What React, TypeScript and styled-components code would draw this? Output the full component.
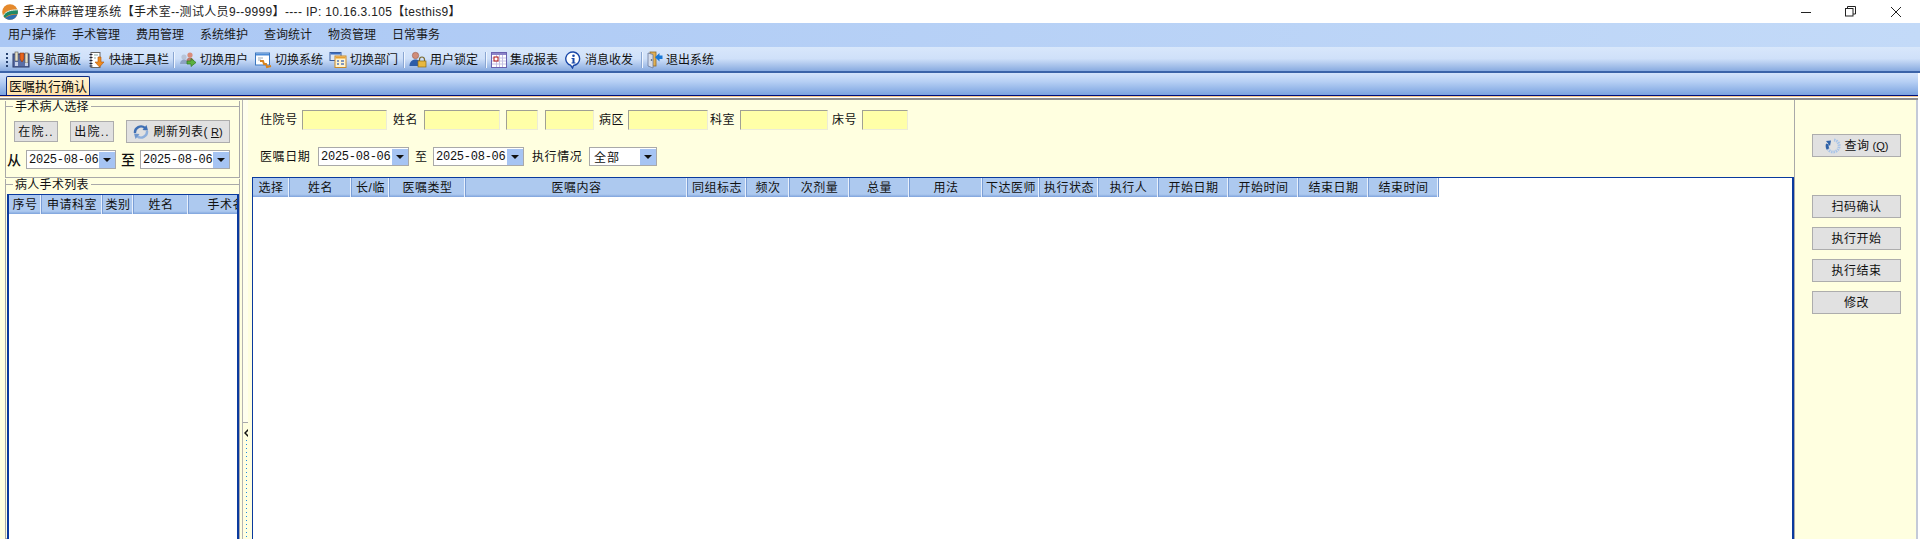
import React from "react";
import styled, { createGlobalStyle } from "styled-components";

const Global = createGlobalStyle`
  html, body { margin: 0; padding: 0; background: #fff; overflow: hidden; }
  #root { width: 1920px; height: 539px; overflow: hidden; }
  * { box-sizing: border-box; }
`;

const FONT = `"Liberation Sans", "Noto Sans CJK SC", sans-serif`;
const MONO = `"Liberation Mono", "Noto Sans CJK SC", monospace`;

const Shell = styled.div`
  width: 1920px; height: 539px; display: flex; flex-direction: column;
  font: 12px/14px ${FONT}; color: #111; background: #fff; overflow: hidden;
`;
const TitleBar = styled.div`
  height: 23px; flex: none; background: #fff; display: flex; align-items: center; padding-left: 2px;
`;
const TitleText = styled.span`
  margin-left: 5px; font-size: 12px; color: #222; white-space: pre; letter-spacing: 0.33px;
`;
const WinButtons = styled.div`
  margin-left: auto; display: flex; align-items: center; height: 100%; padding-right: 18px; gap: 33px;
`;
const MenuBar = styled.div`
  height: 24px; flex: none; display: flex; align-items: center; padding-left: 8px; gap: 16px;
  background: linear-gradient(90deg, #aac7f4, #c3daf8);
`;
const MenuItem = styled.span`color: #1a1a1a;`;
const ToolBar = styled.div`
  height: 26px; flex: none; display: flex; align-items: center; padding: 0 0 0 6px;
  background: linear-gradient(180deg, #d8e7fb 0%, #cfe0f9 45%, #86a9df 94%, #3b63a8 94%);
`;
const Grip = styled.span`
  width: 2px; height: 14px; margin-right: 4px; flex: none;
  background: repeating-linear-gradient(180deg, #27416f 0 2px, transparent 2px 4px);
`;
const ToolItem = styled.span<{ $w: number }>`
  width: ${(p) => p.$w}px; flex: none; display: flex; align-items: center; gap: 3px; white-space: nowrap;
`;
const ToolSep = styled.span`
  width: 1px; height: 16px; background: #8aa6d2; box-shadow: 1px 0 0 #f0f6ff; margin: 0 5px 0 3px; flex: none;
`;
const TabStrip = styled.div`
  height: 22px; flex: none; display: flex; align-items: flex-end; padding: 0 2px 0 6px; margin-right: 2px;
  background: linear-gradient(180deg, #d4e3fb 0%, #b6cff4 40%, #7ba3e0 100%);
`;
const Tab = styled.div`
  width: 84px; height: 19px; display: flex; align-items: center; justify-content: center; padding-top: 2px;
  border: 1px solid #0a2a80; border-bottom: none; border-radius: 2px 2px 0 0; font-size: 13px;
  background: linear-gradient(180deg, #fff3d0 0%, #ffe0a8 100%); color: #111;
`;
const TabRule = styled.div`
  height: 5px; flex: none; background: linear-gradient(180deg, #00107a 0 1px, #f6c78c 1px 2px, #fff 2px 3px, #8c8c8c 3px 5px);
  margin-right: 2px;
`;
const Body = styled.div`
  flex: 1; display: flex; min-height: 0; padding-left: 2px; margin-right: 2px; position: relative; background: #ffffe0;
`;

/* left column */
const LeftColumn = styled.div`
  width: 238px; flex: none; display: flex; flex-direction: column; padding: 1px 0 0 3px;
`;
const Group = styled.div<{ $h?: number; $mt?: number }>`
  border: 1px solid #a9a9a9; border-top: none; position: relative; margin-top: ${(p) => p.$mt ?? 0}px;
  ${(p) => (p.$h ? `height: ${p.$h}px; flex: none;` : "flex: 1; min-height: 0;")}
  &::before {
    content: ""; position: absolute; left: 0; right: 0; top: 5px; border-top: 1px solid #a9a9a9;
  }
`;
const GroupTitle = styled.div`
  position: relative; z-index: 1; height: 13px; line-height: 13px; margin-left: 7px; width: fit-content;
  padding: 0 2px; background: #ffffe0; letter-spacing: 0.3px;
`;
const LeftRow = styled.div<{ $gap: number; $top: number; $left: number }>`
  display: flex; align-items: center; gap: ${(p) => p.$gap}px;
  margin-top: ${(p) => p.$top}px; padding-left: ${(p) => p.$left}px;
`;
const FlatButton = styled.div<{ $w: number; $h?: number; $track?: number }>`
  width: ${(p) => p.$w}px; height: ${(p) => p.$h ?? 21}px; flex: none; display: flex; align-items: center; justify-content: center; gap: 4px;
  background: #e1e1e1; border: 1px solid #adadad; color: #111; white-space: nowrap; letter-spacing: ${(p) => p.$track ?? 0.5}px;
`;
const Hotkey = styled.span`letter-spacing: 0; font-size: 11px; margin-left: -1px;`;
const ZhLarge = styled.span`font-size: 14px; font-weight: 500; color: #111; width: 14px;`;
const DateBox = styled.div<{ $w: number }>`
  width: ${(p) => p.$w}px; height: 19px; flex: none; display: flex; align-items: center; justify-content: space-between;
  background: #fff; border: 1px solid #a9a9a9; padding: 0 0 0 2px;
  font: 12px ${MONO}; letter-spacing: -0.25px; color: #111;
`;
const ZhInBox = styled.span`font: 12px ${FONT}; margin-left: 2px; letter-spacing: 1px;`;
const DropArrow = styled.span`
  width: 16px; height: 16px; flex: none; background: #a6c4f3; display: flex; align-items: center; justify-content: center;
  &::after { content: ""; border: 4px solid transparent; border-top: 4px solid #111; border-bottom: none; }
`;
const PatientList = styled.div`
  position: absolute; left: 1px; right: 0; top: 15px; bottom: -2px;
  border: 1px solid #0a3a9e; border-left-width: 2px; border-right-width: 2px; background: #fff; overflow: hidden;
`;

/* grid header shared */
const HeaderRow = styled.div<{ $w?: number }>`
  display: flex; height: 19px; ${(p) => (p.$w ? `width: ${p.$w}px;` : "")}
  background: linear-gradient(180deg, #adc9ef 0%, #adc9ef 85%, #7ea3dc 100%);
`;
const HeaderCell = styled.div<{ $w: number }>`
  width: ${(p) => p.$w}px; flex: none; display: flex; align-items: center; justify-content: center; white-space: nowrap; overflow: hidden;
  border-right: 1px solid #7a9ed6; box-shadow: inset -1px 0 0 #e8f0fc; color: #111; letter-spacing: 0.5px;
`;

/* splitter */
const SplitterTrack = styled.div`
  width: 10px; flex: none; border-left: 1px solid #b4b4b4; margin-left: 2px; margin-right: -4px; background: #ffffee; padding-top: 322px;
`;
const SplitterHandle = styled.div`
  width: 8px; height: 120px; border: 1px solid #a9a9a9; border-left: none; border-bottom: none; background: #ffffe0;
  display: flex; flex-direction: column; align-items: center; padding-top: 6px;
`;
const SplitArrow = styled.svg`display: block; flex: none;`;
const SplitDots = styled.span`
  flex: 1; width: 1px; margin-top: 3px;
  background: repeating-linear-gradient(180deg, #1d8be0 0 1px, transparent 1px 4px);
`;

/* centre */
const Centre = styled.div`
  width: 1547px; flex: none; display: flex; flex-direction: column; border-right: 1px solid #a9a9a9; position: relative;
  background: #ffffe0;
`;
const FilterRow = styled.div<{ $top: number; $h: number }>`
  display: flex; align-items: center; height: ${(p) => p.$h}px; margin-top: ${(p) => p.$top}px; padding-left: 12px;
`;
const Label = styled.span<{ $w: number; $pad?: number }>`
  width: ${(p) => p.$w}px; padding-left: ${(p) => p.$pad ?? 0}px; flex: none; white-space: nowrap; color: #111; letter-spacing: 0.6px;
`;
const Field = styled.div<{ $w: number; $gap?: number }>`
  width: ${(p) => p.$w}px; height: 20px; flex: none; margin-right: ${(p) => p.$gap ?? 0}px;
  background: #ffffa8; border: 1px solid #c4c4b8; border-top-color: #a0a094; border-left-color: #a0a094;
  border-right-color: #ececd8; border-bottom-color: #ececd8;
`;
const OrderTable = styled.div`
  flex: 1; margin: 11px 0 0 4px; background: #fff; min-height: 0;
  border: 1px solid #0a3a9e; border-width: 1px 2px 0 1px; overflow: hidden;
`;

/* right */
const RightColumn = styled.div`
  flex: 1; display: flex; flex-direction: column; align-items: flex-start; padding: 34px 0 0 17px;
  border-right: 2px solid #c4cad8;
`;
const RightGap = styled.div`height: 38px; flex: none;`;
const RightStack = styled.div`display: flex; flex-direction: column; gap: 9px;`;

const WinMin = () => (
  <svg width="12" height="12" viewBox="0 0 12 12"><path d="M1 6.500h10" stroke="#222" strokeWidth="1" /></svg>
);
const WinRestore = () => (
  <svg width="12" height="12" viewBox="0 0 12 12" fill="none" stroke="#222">
    <rect x="0.500" y="2.500" width="7.500" height="7.500" />
    <path d="M2.500 2.500V0.500H10.500V8H8" />
  </svg>
);
const WinClose = () => (
  <svg width="12" height="12" viewBox="0 0 12 12"><path d="M1 1l10 10M11 1L1 11" stroke="#222" strokeWidth="1" /></svg>
);
const Logo = () => (
  <svg width="16" height="16" viewBox="0 0 16 16">
    <circle cx="8" cy="8" r="7.800" fill="#e5892b" />
    <path d="M1.200 11.800C4 6.500 10 6 15.600 5.800 16 7.500 16 8.500 15.600 10 10 10 6 10.500 3 14z" fill="#1d8a66" />
    <path d="M3 14C6.500 11.200 11 10.600 15.400 10.400 14 13.600 11.300 15.800 8 15.800 6 15.800 4.400 15.100 3 14z" fill="#2c6fb4" />
    <path d="M1.200 11.800C4 6.500 10 6 15.600 5.800" fill="none" stroke="#f4f4ea" strokeWidth="1" />
  </svg>
);
const IconNav = () => (
  <svg width="18" height="18" viewBox="0 0 18 18">
    <rect x="1" y="3" width="16" height="13" fill="#5a6fa8" stroke="#2c3a68" />
    <rect x="3" y="1" width="3" height="9" fill="#e9e2c8" stroke="#555" strokeWidth=".6" />
    <path d="M8 2h4v6l-2 3-2-3z" fill="#e8641e" stroke="#8c3608" strokeWidth=".6" />
    <rect x="13" y="2" width="3" height="10" fill="#e9e2c8" stroke="#555" strokeWidth=".6" />
    <rect x="3" y="11" width="3" height="4" fill="#c8d2ea" />
    <rect x="13" y="12" width="3" height="3" fill="#c8d2ea" />
  </svg>
);
const IconTool = () => (
  <svg width="18" height="18" viewBox="0 0 18 18">
    <rect x="3" y="1.500" width="9" height="15" fill="#fff" stroke="#666" />
    <path d="M1.500 3.500h3M1.500 6.500h3M1.500 9.500h3M1.500 12.500h3M1.500 15h3" stroke="#223" strokeWidth="1.200" />
    <path d="M6 4h4M6 7h2" stroke="#8aa" />
    <path d="M10 6h3v5h3l-4.500 5L7 11h3z" fill="#f08a1c" stroke="#b0540c" strokeWidth=".6" />
  </svg>
);
const IconUsers = () => (
  <svg width="18" height="18" viewBox="0 0 18 18">
    <circle cx="11" cy="4" r="2.600" fill="#d98c7a" />
    <path d="M7 11c0-3 2-4.500 4-4.500s4 1.500 4 4.500z" fill="#b87a70" />
    <circle cx="5" cy="6" r="2.600" fill="#b8c4d8" />
    <path d="M1 13c0-3 2-4.500 4-4.500S9 10 9 13z" fill="#8ea2c4" />
    <path d="M8 10h4V7.500l5 4-5 4V13H8z" fill="#5cb040" stroke="#2c7a1c" strokeWidth=".7" />
  </svg>
);
const IconSystem = () => (
  <svg width="18" height="18" viewBox="0 0 18 18">
    <rect x="1.500" y="2" width="14" height="12" fill="#fff" stroke="#3c78c0" />
    <rect x="2" y="2.500" width="13" height="2" fill="#4c8cd8" />
    <path d="M4 7h5M4 9h3" stroke="#9ab" />
    <path d="M6 10h3l1 3h2l1 3 4-1" fill="none" stroke="#d8821c" strokeWidth="2" />
  </svg>
);
const IconDept = () => (
  <svg width="18" height="18" viewBox="0 0 18 18">
    <rect x="1" y="1.500" width="11" height="8" fill="#dfe8f6" stroke="#3a5ea0" />
    <rect x="1.500" y="2" width="10" height="1.500" fill="#3a6cc0" />
    <rect x="6" y="5" width="11" height="11.500" fill="#fff4d0" stroke="#c88a2c" />
    <rect x="6.500" y="5.500" width="10" height="2" fill="#e8a030" />
    <path d="M8 10h2M12 10h3M8 13h2M12 13h3" stroke="#5878b8" strokeWidth="1.500" />
  </svg>
);
const IconLock = () => (
  <svg width="18" height="18" viewBox="0 0 18 18">
    <circle cx="6.500" cy="4.500" r="3.200" fill="#d08c78" stroke="#8c5444" strokeWidth=".5" />
    <path d="M0.500 15c0-4 2.500-6.500 6-6.500s5 2 5 6.500z" fill="#2c5ca8" />
    <path d="M10.500 10V8.500a2.500 2.500 0 015 0V10" fill="none" stroke="#7a6a30" strokeWidth="1.200" />
    <rect x="9" y="10" width="8" height="6" fill="#e8b840" stroke="#8c6a14" strokeWidth=".7" />
  </svg>
);
const IconReport = () => (
  <svg width="16" height="16" viewBox="0 0 16 16">
    <rect x=".5" y=".5" width="15" height="15" fill="#fff" stroke="#6a62b0" />
    <rect x="1" y="1" width="14" height="2" fill="#8c84c8" />
    <path d="M5.500 3v12M8.500 3v12M11.500 3v12M1 6h14M1 9h14M1 12h14" stroke="#c4c0e4" />
    <rect x="3" y="5" width="4" height="4" fill="#fff" stroke="#b01010" strokeWidth="1" />
  </svg>
);
const IconInfo = () => (
  <svg width="17" height="18" viewBox="0 0 17 18">
    <path d="M8.500 1a7 6.800 0 00-3 13.200L7.500 17l1-2.500A7 6.800 0 008.500 1z" fill="#fff" stroke="#1a48a8" strokeWidth="1.400" />
    <circle cx="8.500" cy="4.800" r="1.300" fill="#1a48a8" />
    <path d="M6.500 7h3v4.500h1v1H6.500v-1h1V8h-1z" fill="#1a48a8" />
  </svg>
);
const IconExit = () => (
  <svg width="16" height="18" viewBox="0 0 16 18">
    <rect x="3" y="1" width="6" height="14" fill="#e2b050" stroke="#8c6a2c" strokeWidth=".8" />
    <path d="M1 2l5 1.500V17L1 15z" fill="#d4dcec" stroke="#6a7a9c" strokeWidth=".8" />
    <circle cx="4.500" cy="9" r=".8" fill="#345" />
    <path d="M15.500 4.500v3.500h-3v2.500L8 6.200l4.500-4.200v2.500z" fill="#1878d8" />
  </svg>
);
const IconRefresh = () => (
  <svg width="16" height="16" viewBox="0 0 16 16" fill="none">
    <path d="M2 9a6 6 0 0110-5" stroke="#3f6fb4" strokeWidth="2.400" />
    <path d="M14 7a6 6 0 01-10 5" stroke="#8fb0dc" strokeWidth="2.400" />
    <path d="M9.500 6L15 6.500 13.500 1z" fill="#3f6fb4" />
    <path d="M6.500 10L1 9.500 2.500 15z" fill="#6f96cc" />
  </svg>
);
const IconQuery = () => (
  <svg width="16" height="16" viewBox="0 0 16 16" fill="none">
    <path d="M9 2a6 6 0 11-6 9" stroke="#a8c4e8" strokeWidth="3" strokeDasharray="1.500 .8" />
    <path d="M3 11a6 6 0 01-.5-5" stroke="#2f62a8" strokeWidth="3" />
    <path d="M1 3l5-.5L5 8z" fill="#2f62a8" />
  </svg>
);

const menus = ["用户操作", "手术管理", "费用管理", "系统维护", "查询统计", "物资管理", "日常事务"];

const leftColumns: [string, number][] = [
  ["序号", 33], ["申请科室", 61], ["类别", 31], ["姓名", 55], ["手术名称", 88],
];
const orderColumns: [string, number][] = [
  ["选择", 37], ["姓名", 62], ["长/临", 38], ["医嘱类型", 76], ["医嘱内容", 222], ["同组标志", 59],
  ["频次", 43], ["次剂量", 60], ["总量", 60], ["用法", 73], ["下达医师", 57], ["执行状态", 59],
  ["执行人", 60], ["开始日期", 70], ["开始时间", 70], ["结束日期", 70], ["结束时间", 70],
];

const DateField = ({ w }: { w: number }) => (
  <DateBox $w={w}>2025-08-06<DropArrow /></DateBox>
);

export default function App() {
  return (
    <Shell>
      <Global />
      <TitleBar>
        <Logo />
        <TitleText>手术麻醉管理系统【手术室--测试人员9--9999】---- IP: 10.16.3.105【testhis9】</TitleText>
        <WinButtons><WinMin /><WinRestore /><WinClose /></WinButtons>
      </TitleBar>
      <MenuBar>
        {menus.map((m) => <MenuItem key={m}>{m}</MenuItem>)}
      </MenuBar>
      <ToolBar>
        <Grip />
        <ToolItem $w={76}><IconNav />导航面板</ToolItem>
        <ToolItem $w={82}><IconTool />快捷工具栏</ToolItem>
        <ToolSep />
        <ToolItem $w={75}><IconUsers />切换用户</ToolItem>
        <ToolItem $w={75}><IconSystem />切换系统</ToolItem>
        <ToolItem $w={71}><IconDept />切换部门</ToolItem>
        <ToolSep />
        <ToolItem $w={73}><IconLock />用户锁定</ToolItem>
        <ToolSep />
        <ToolItem $w={74}><IconReport />集成报表</ToolItem>
        <ToolItem $w={73}><IconInfo />消息收发</ToolItem>
        <ToolSep />
        <ToolItem $w={75}><IconExit />退出系统</ToolItem>
      </ToolBar>
      <TabStrip><Tab>医嘱执行确认</Tab></TabStrip>
      <TabRule />
      <Body>
        <LeftColumn>
          <Group $h={77}>
            <GroupTitle>手术病人选择</GroupTitle>
            <LeftRow $gap={12} $top={6} $left={8}>
              <FlatButton $w={44} $track={1.2}>在院..</FlatButton>
              <FlatButton $w={44} $track={1.2}>出院..</FlatButton>
              <FlatButton $w={104} $h={23}><IconRefresh />刷新列表(<Hotkey><u>R</u>)</Hotkey></FlatButton>
            </LeftRow>
            <LeftRow $gap={5} $top={7} $left={1}>
              <ZhLarge>从</ZhLarge>
              <DateField w={90} />
              <ZhLarge>至</ZhLarge>
              <DateField w={90} />
            </LeftRow>
          </Group>
          <Group $mt={1}>
            <GroupTitle>病人手术列表</GroupTitle>
            <PatientList>
              <HeaderRow>
                {leftColumns.map(([t, w]) => <HeaderCell key={t} $w={w}>{t}</HeaderCell>)}
              </HeaderRow>
            </PatientList>
          </Group>
        </LeftColumn>
        <SplitterTrack>
          <SplitterHandle>
            <SplitArrow width="5" height="8" viewBox="0 0 5 8"><path d="M4.500 0.500L1 4l3.500 3.500" fill="none" stroke="#111" strokeWidth="1.500" /></SplitArrow>
            <SplitDots />
          </SplitterHandle>
        </SplitterTrack>
        <Centre>
          <FilterRow $top={10} $h={20}>
            <Label $w={42}>住院号</Label>
            <Field $w={85} $gap={6} />
            <Label $w={31}>姓名</Label>
            <Field $w={76} $gap={6} />
            <Field $w={32} $gap={7} />
            <Field $w={49} $gap={5} />
            <Label $w={29}>病区</Label>
            <Field $w={80} $gap={2} />
            <Label $w={30}>科室</Label>
            <Field $w={88} $gap={4} />
            <Label $w={30}>床号</Label>
            <Field $w={46} />
          </FilterRow>
          <FilterRow $top={17} $h={19}>
            <Label $w={58}>医嘱日期</Label>
            <DateField w={91} />
            <Label $w={24} $pad={6}>至</Label>
            <DateField w={91} />
            <Label $w={65} $pad={8}>执行情况</Label>
            <DateBox $w={68}><ZhInBox>全部</ZhInBox><DropArrow /></DateBox>
          </FilterRow>
          <OrderTable>
            <HeaderRow $w={1186}>
              {orderColumns.map(([t, w]) => <HeaderCell key={t} $w={w}>{t}</HeaderCell>)}
            </HeaderRow>
          </OrderTable>
        </Centre>
        <RightColumn>
          <FlatButton $w={89} $h={23}><IconQuery />查询<Hotkey>(<u>Q</u>)</Hotkey></FlatButton>
          <RightGap />
          <RightStack>
            <FlatButton $w={89} $h={23}>扫码确认</FlatButton>
            <FlatButton $w={89} $h={23}>执行开始</FlatButton>
            <FlatButton $w={89} $h={23}>执行结束</FlatButton>
            <FlatButton $w={89} $h={23}>修改</FlatButton>
          </RightStack>
        </RightColumn>
      </Body>
    </Shell>
  );
}
